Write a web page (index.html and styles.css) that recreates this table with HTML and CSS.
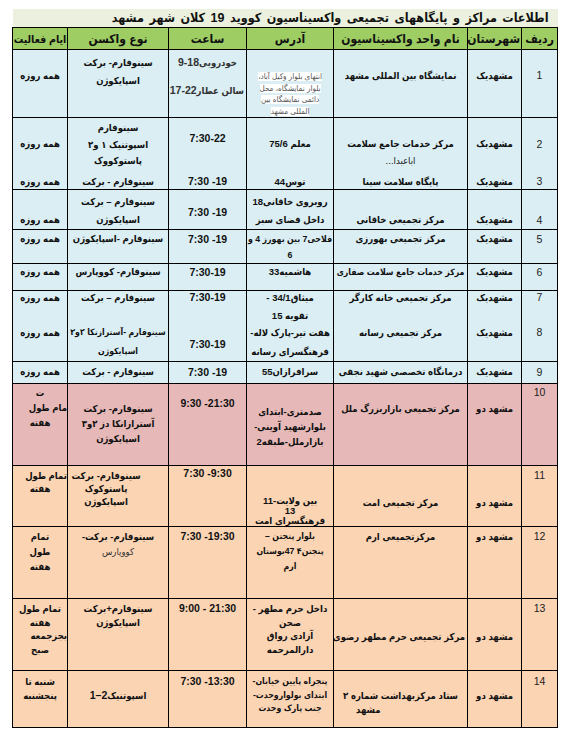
FILE: index.html
```html
<!DOCTYPE html>
<html lang="fa">
<head>
<meta charset="utf-8">
<title>مراکز واکسیناسیون</title>
<link rel="stylesheet" href="styles.css">
</head>
<body>
<table class="grid">
  <colgroup>
    <col class="c-num"><col class="c-city"><col class="c-name"><col class="c-addr"><col class="c-time"><col class="c-vac"><col class="c-days">
  </colgroup>
  <tr class="r-title"><td colspan="7" class="title">اطلاعات مراکز و پایگاههای تجمیعی واکسیناسیون کووید 19 کلان شهر مشهد</td></tr>
  <tr class="r-head"><th>ردیف</th><th>شهرستان</th><th>نام واحد واکسیناسیون</th><th>آدرس</th><th>ساعت</th><th>نوع واکسن</th><th class="narrow">ایام فعالیت</th></tr>

  <tr class="r1 blue">
    <td class="num pt18">1</td>
    <td class="pt18">مشهدیک</td>
    <td class="pt18">نمایشگاه بین المللی مشهد</td>
    <td class="note"><span>انتهای بلوار وکیل آباد،</span><br><span>بلوار نمایشگاه، محل</span><br><span>دائمی نمایشگاه بین</span><br><span>المللی مشهد</span></td>
    <td class="pt5 light"><div>خودرویی<span class="ltr">9-18</span></div><div class="gap13">سالن عطار<span class="ltr">17-22</span></div></td>
    <td class="pt4 lh18">سینوفارم- برکت<br>اسپایکوژن</td>
    <td class="pt18">همه روزه</td>
  </tr>

  <tr class="r2 blue">
    <td class="num pt18">2</td>
    <td class="pt18">مشهدیک</td>
    <td class="pt18">مرکز خدمات جامع سلامت<br><span class="semi">اباعبدا...</span></td>
    <td class="pt18">معلم 75/6</td>
    <td class="pt12"><span class="ltr">7:30-22</span></td>
    <td class="pt2">سینوفارم<br>اسپوتنیک ۱ و۲<br>پاستوکووک</td>
    <td class="pt18">همه روزه</td>
  </tr>
  <tr class="r3 blue joined">
    <td class="num">3</td>
    <td>مشهدیک</td>
    <td class="semi">پایگاه سلامت سینا</td>
    <td>توس44</td>
    <td><span class="ltr">7:30 -19</span></td>
    <td>سینوفارم - برکت</td>
    <td>همه روزه</td>
  </tr>

  <tr class="r4 blue">
    <td class="num pt21">4</td>
    <td class="pt21">مشهدیک</td>
    <td class="pt21">مرکز تجمیعی خاقانی</td>
    <td class="pt3">روبروی خاقانی18<br>داخل فضای سبز</td>
    <td class="pt13"><span class="ltr">7:30 -19</span></td>
    <td class="pt3">سینوفارم – برکت<br>اسپایکوژن</td>
    <td class="pt21">همه روزه</td>
  </tr>

  <tr class="r5 blue">
    <td class="num pt1">5</td>
    <td class="pt1">مشهدیک</td>
    <td class="pt1">مرکز تجمیعی بهورزی</td>
    <td class="pt1 tight">فلاحی7 بین بهورز 4 و<br>6</td>
    <td class="pt1"><span class="ltr">7:30 -19</span></td>
    <td class="pt1">سینوفارم -اسپایکوژن</td>
    <td class="pt1">همه روزه</td>
  </tr>

  <tr class="r6 blue">
    <td class="num">6</td>
    <td>مشهدیک</td>
    <td class="tight">مرکز خدمات جامع سلامت صفاری</td>
    <td>هاشمیه33</td>
    <td><span class="ltr">7:30-19</span></td>
    <td>سینوفارم- کووپارس</td>
    <td>همه روزه</td>
  </tr>

  <tr class="r7 blue">
    <td class="num">7</td>
    <td>مشهدیک</td>
    <td>مرکز تجمیعی خانه کارگر</td>
    <td><div>میثاق34/1 -</div><div class="gap5">تقویه 15</div></td>
    <td><span class="ltr">7:30-19</span></td>
    <td>سینوفارم – برکت</td>
    <td>همه روزه</td>
  </tr>
  <tr class="r8 blue joined">
    <td class="num">8</td>
    <td>مشهدیک</td>
    <td>مرکز تجمیعی رسانه</td>
    <td>هفت تیر-پارک لاله-<br>فرهنگسرای رسانه</td>
    <td class="pt12"><span class="ltr">7:30-19</span></td>
    <td class="tight">سینوفارم -آسترازنکا ۲و۳<br>اسپایکوژن</td>
    <td>همه روزه</td>
  </tr>

  <tr class="r9 blue">
    <td class="num pt2">9</td>
    <td class="pt2">مشهدیک</td>
    <td class="pt2">درمانگاه تخصصی شهید نجفی</td>
    <td class="pt2">سرافرازان55</td>
    <td class="pt2"><span class="ltr">7:30 -19</span></td>
    <td class="pt2">سینوفارم - برکت</td>
    <td class="pt2">همه روزه</td>
  </tr>

  <tr class="r10 pink">
    <td class="num pt1">10</td>
    <td class="pt17">مشهد دو</td>
    <td class="pt17">مرکز تجمیعی بازاربزرگ ملل</td>
    <td class="pt20">صدمتری-ابتدای<br>بلوارشهید آوینی-<br>بازارملل-طبقه2</td>
    <td class="pt12"><span class="ltr">9:30 -21:30</span></td>
    <td class="pt17">سینوفارم- برکت<br>آسترازانکا دز ۲و۳<br>اسپایکوژن</td>
    <td class="pt1"><div>ت</div><div class="edge">مام طول</div><div>هفته</div></td>
  </tr>

  <tr class="r11 peach">
    <td class="num pt3">11</td>
    <td class="pt29 lh15">مشهد دو</td>
    <td class="pt29 lh15">مرکز تجمیعی امت</td>
    <td class="pt30 lh10">بین ولایت-11<br>13<br>فرهنگسرای امت</td>
    <td class="pt1"><span class="ltr">7:30 -9:30</span></td>
    <td class="pt3 shift">سینوفارم- برکت<br>پاستوکوک<br>اسپایکوژن</td>
    <td class="pt3"><div class="edge">تمام طول</div><div>هفته</div></td>
  </tr>

  <tr class="r12 peach">
    <td class="num pt2">12</td>
    <td class="pt2">مشهد دو</td>
    <td class="pt2">مرکزتجمیعی ارم</td>
    <td class="pt2 tight">بلوار پنجتن –<br>پنجتن۴ 47بوستان<br>ارم</td>
    <td class="pt2"><span class="ltr">7:30 -19:30</span></td>
    <td class="pt2">سینوفارم- برکت-<br><span class="light">کووپارس</span></td>
    <td class="pt2">تمام<br>طول<br>هفته</td>
  </tr>

  <tr class="r13 peach">
    <td class="num pt3">13</td>
    <td class="pt31">مشهد دو</td>
    <td class="pt31">مرکز تجمیعی حرم مطهر رضوی</td>
    <td class="pt3">داخل حرم مطهر -<br>صحن<br>آزادی رواق<br>دارالمرحمه</td>
    <td class="pt3"><span class="ltr">9:00 - 21:30</span></td>
    <td class="pt3">سینوفارم+برکت<br>اسپایکوژن</td>
    <td class="pt3"><div>تمام طول</div><div>هفته</div><div class="edge">بجزجمعه</div><div>صبح</div></td>
  </tr>

  <tr class="r14 peach">
    <td class="num pt4">14</td>
    <td class="pt18">مشهد دو</td>
    <td class="pt18"><div>ستاد مرکزبهداشت شماره ۲</div><div class="tail">مشهد</div></td>
    <td class="pt4 tight">پنجراه پایین خیابان-<br>ابتدای بولواروحدت-<br>جنب پارک وحدت</td>
    <td class="pt4"><span class="ltr">7:30 -13:30</span></td>
    <td class="pt18">اسپوتنیک<span class="ltr">1–2</span></td>
    <td class="pt4">شنبه تا<br>پنجشنبه</td>
  </tr>
</table>
</body>
</html>
```

FILE: styles.css
```css
html, body {
  margin: 0;
  padding: 0;
  background: #ffffff;
}

body {
  font-family: "Liberation Sans", "DejaVu Sans Condensed", "DejaVu Sans", sans-serif;
  color: #111;
}

.grid {
  direction: rtl;
  border-collapse: collapse;
  table-layout: fixed;
  width: 545px;
  margin: 9px 0 0 12px;
}

.c-num { width: 36px; }
.c-city { width: 54px; }
.c-name { width: 134px; }
.c-addr { width: 87px; }
.c-time { width: 78px; }
.c-vac { width: 101px; }
.c-days { width: 55px; }

.grid td,
.grid th {
  border: 1px solid #000;
  padding: 0 2px;
  text-align: center;
  vertical-align: top;
  font-weight: bold;
  font-size: 9.5px;
  line-height: 15px;
  white-space: nowrap;
  overflow: hidden;
}

.grid td.num { font-size: 10.5px; font-weight: normal; color: #222; }

.grid .title {
  border: none;
  border-bottom: 1px solid #000;
  background: #ebf1de;
  font-size: 12.5px;
  word-spacing: 2px;
  line-height: 18px;
  text-align: right;
  padding: 0 9px 0 0;
  vertical-align: middle;
}

.r-title { height: 18px; }

.r-head { height: 22px; background: #9dcd63; }
.grid .r-head th {
  font-size: 12px;
  line-height: 20px;
  vertical-align: middle;
  padding: 0 1px;
}
.grid .r-head th.narrow { font-size: 10.5px; padding: 0; }

.blue { background: #daeef3; }
.pink { background: #e6b9b8; }
.peach { background: #fbd4b4; }

.r1 { height: 68px; }
.r2 { height: 56px; }
.r3 { height: 15px; }
.r4 { height: 40px; }
.r5 { height: 32px; }
.r6 { height: 27px; }
.r7 { height: 33px; }
.r8 { height: 38px; }
.r9 { height: 22px; }
.r10 { height: 82px; }
.r11 { height: 61px; }
.r12 { height: 72px; }
.r13 { height: 72px; }
.r14 { height: 57px; }

.grid .r2 td { line-height: 16.5px; }
.grid .r4 td { line-height: 18px; }
.grid .r5 td,
.grid .r6 td,
.grid .r9 td { line-height: 16px; }
.grid .r7 td { line-height: 13px; }
.grid .r8 td { line-height: 19px; }
.grid .r11 td { line-height: 13px; }
.grid .r12 td { line-height: 15px; }
.grid .r13 td,
.grid .r14 td { line-height: 13.5px; }

.grid .joined td { border-top-style: hidden; }

.grid td.lh18 { line-height: 18px; }
.grid td.lh15 { line-height: 15px; }
.grid td.lh10 { line-height: 10px; }

.pt1 { padding-top: 1px !important; }
.pt2 { padding-top: 2px !important; }
.pt3 { padding-top: 3px !important; }
.pt4 { padding-top: 4px !important; }
.pt5 { padding-top: 5px !important; }
.pt12 { padding-top: 12px !important; }
.pt13 { padding-top: 13px !important; }
.pt17 { padding-top: 17px !important; }
.pt18 { padding-top: 18px !important; }
.pt20 { padding-top: 20px !important; }
.pt21 { padding-top: 21px !important; }
.pt29 { padding-top: 29px !important; }
.pt30 { padding-top: 30px !important; }
.pt31 { padding-top: 31px !important; }

.gap13 { margin-top: 13px; }
.gap5 { margin-top: 5px; }

.ltr {
  direction: ltr;
  unicode-bidi: isolate;
  font-size: 10.5px;
}

.light { font-weight: normal; color: #333; }
.semi { font-weight: normal; }

.grid td.note {
  vertical-align: bottom;
  font-weight: normal;
  font-size: 8px;
  line-height: 11.5px;
  color: #555;
  padding-bottom: 0;
}
.note span { background: #ffffff; }

.grid td.tight { padding-left: 0; padding-right: 0; font-size: 8.7px; }

.edge { text-align: right; margin-right: -2px; }
.tail { text-align: left; padding-left: 20px; }
.grid td.shift { padding-right: 26px; }
```
